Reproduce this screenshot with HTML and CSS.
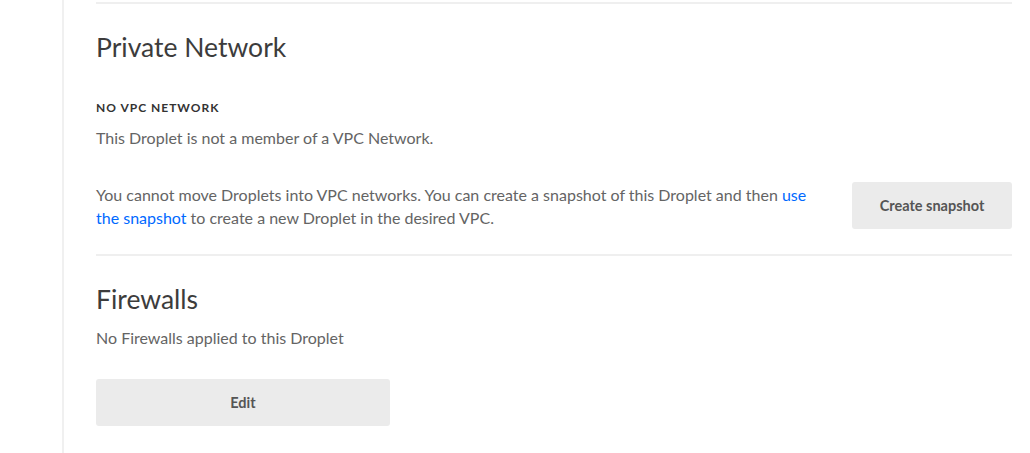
FILE: index.html
```html
<!DOCTYPE html>
<html lang="en">
<head>
    <meta charset="UTF-8">
    <meta name="viewport" content="width=device-width, initial-scale=1.0">
    <title>Droplet Networking</title>
    <link rel="stylesheet" href="styles.css">
</head>
<body>
    <div class="layout">
        <aside class="sidebar"></aside>
        <main class="content">
            <section class="panel panel-network">
                <h2>Private Network</h2>
                <h4 class="label">No VPC network</h4>
                <p>This Droplet is not a member of a VPC Network.</p>
                <div class="move-row">
                    <p>You cannot move Droplets into VPC networks. You can create a snapshot of this Droplet and then <a href="#">use the snapshot</a> to create a new Droplet in the desired VPC.</p>
                    <button class="btn btn-snapshot">Create snapshot</button>
                </div>
            </section>
            <section class="panel panel-firewalls">
                <h2>Firewalls</h2>
                <p>No Firewalls applied to this Droplet</p>
                <button class="btn btn-edit">Edit</button>
            </section>
        </main>
    </div>
</body>
</html>
```
FILE: styles.css
```css
body {
    margin: 0;
    font-family: Lato, "Open Sans", sans-serif;
    color: #646464;
    background: #fff;
}

.layout {
    display: flex;
    min-height: 453px;
}

.sidebar {
    width: 62px;
    border-right: 2px solid #f0f0f0;
    flex-shrink: 0;
}

.content {
    flex: 1;
    padding: 2px 18px 0 32px;
}

.panel {
    border-top: 2px solid #efefef;
}

.panel-network {
    padding: 27px 0 25px;
}

.panel-firewalls {
    padding-top: 27px;
}

h2 {
    margin: 0 0 37px;
    font-size: 26.5px;
    line-height: 32px;
    font-weight: 400;
    color: #3c3c3c;
}

.panel-firewalls h2 {
    margin-bottom: 11px;
}

.label {
    margin: 0 0 10px;
    font-size: 12px;
    line-height: 16px;
    font-weight: 700;
    letter-spacing: 1px;
    text-transform: uppercase;
    color: #333;
}

p {
    margin: 0;
    font-size: 16px;
    line-height: 23px;
}

a {
    color: #0069ff;
    text-decoration: none;
}

.move-row {
    display: flex;
    align-items: center;
    justify-content: space-between;
    margin-top: 33px;
}

.move-row p {
    max-width: 720px;
}

.btn {
    border: none;
    border-radius: 3px;
    background: #ebebeb;
    color: #555;
    font-family: inherit;
    font-size: 14.5px;
    font-weight: 700;
    height: 47px;
    cursor: pointer;
}

.btn-snapshot {
    width: 160px;
    flex-shrink: 0;
}

.btn-edit {
    width: 294px;
    margin-top: 30px;
}
```
